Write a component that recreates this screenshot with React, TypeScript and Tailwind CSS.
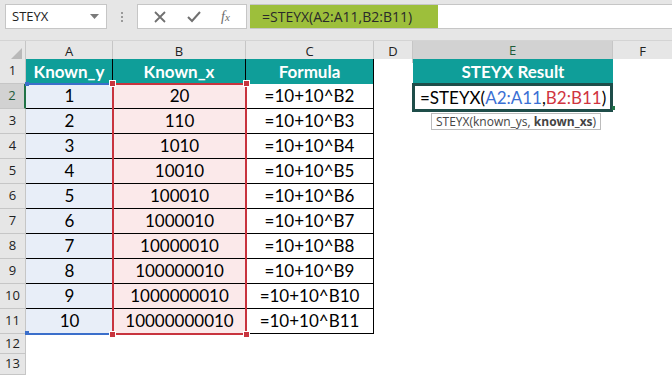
import React from "react";

const ui = { fontFamily: '"Open Sans", "Noto Sans", sans-serif' };
const cell = { fontFamily: 'Lato, "Open Sans", sans-serif' };

// x values are 10 + 10^y
const rows = Array.from({ length: 10 }, (_, i) => ({
  y: i + 1,
  x: i === 0 ? "20" : "1" + "0".repeat(i - 1) + "10",
  f: `=10+10^B${i + 2}`,
}));

const Handle = ({ className }: { className: string }) => (
  <div className={`absolute w-[7px] h-[7px] bg-[#c8343e] border border-white ${className}`} />
);

export default function App() {
  return (
    <div className="w-[672px] h-[375px] overflow-hidden bg-white relative" style={ui}>
      {/* Name box + formula bar */}
      <div className="h-[40px] bg-[#e6e6e6] flex items-start pt-[4px] pl-[5px]">
        <div className="w-[102px] h-[25px] bg-white border border-[#c6c6c6] flex items-center justify-between pl-[6px] pr-[7px]">
          <span className="text-[13px] text-[#222]">STEYX</span>
          <svg width="9" height="5" viewBox="0 0 9 5">
            <path d="M0 0h9L4.5 5z" fill="#7a7a7a" />
          </svg>
        </div>
        <div className="w-[30px] h-[25px] flex flex-col items-center justify-center gap-[2px]">
          <div className="w-[2px] h-[2px] bg-[#9a9a9a]" />
          <div className="w-[2px] h-[2px] bg-[#9a9a9a]" />
          <div className="w-[2px] h-[2px] bg-[#9a9a9a]" />
        </div>
        <div className="w-[110px] h-[25px] bg-white border border-[#c6c6c6] flex items-center justify-around px-[6px]">
          <svg width="12" height="12" viewBox="0 0 12 12">
            <path d="M1 1l10 10M11 1L1 11" stroke="#707070" strokeWidth="1.8" />
          </svg>
          <svg width="14" height="12" viewBox="0 0 14 12">
            <path d="M1 6l4 4 8-9" stroke="#707070" strokeWidth="2" fill="none" />
          </svg>
          <span className="text-[14px] italic text-[#6a6a6a]" style={{ fontFamily: '"Liberation Serif", serif' }}>
            f<span className="text-[11px]">x</span>
          </span>
        </div>
        <div className="ml-[3px] flex-1 h-[25px] bg-white border-y border-[#c6c6c6] flex items-stretch">
          <div className="w-[188px] bg-[#9dbf3b] flex items-center pl-[12px] text-[14px] text-[#2a2a2a]">
            =STEYX(A2:A11,B2:B11)
          </div>
        </div>
      </div>

      {/* Column headers */}
      <div className="grid grid-cols-[26px_87px_133px_128px_39px_200px_59px] h-[19px] bg-[#e6e6e6] text-[13px] text-[#222] border-t border-[#d4d4d4]">
        <div className="relative border-r border-[#c6c6c6]">
          <svg className="absolute right-[3px] bottom-[3px]" width="12" height="12" viewBox="0 0 12 12">
            <path d="M12 0v12H0z" fill="#b9b9b9" />
          </svg>
        </div>
        <div className="flex items-center justify-center border-r border-[#c6c6c6]">A</div>
        <div className="flex items-center justify-center border-r border-[#c6c6c6]">B</div>
        <div className="flex items-center justify-center border-r border-[#c6c6c6]">C</div>
        <div className="flex items-center justify-center border-r border-[#c6c6c6]">D</div>
        <div className="flex items-center justify-center bg-[#d2d2d2] border-r border-[#c6c6c6] border-b-2 border-b-[#217346] text-[#1f5c3a]">E</div>
        <div className="flex items-center justify-center">F</div>
      </div>

      {/* Sheet body */}
      <div className="relative">
        <div className="grid grid-cols-[26px_87px_133px_128px_39px_200px_59px] grid-rows-[25px_repeat(10,25px)_20px_21px]">
          {/* Row 1 */}
          <div className="bg-[#e6e6e6] border-r border-b border-[#c6c6c6] flex items-center justify-center text-[13px] text-[#222]">1</div>
          <div className="bg-[#0f9e99] border-r border-black flex items-center justify-center text-white font-bold text-[17px]" style={cell}>Known_y</div>
          <div className="bg-[#0f9e99] border-r border-black flex items-center justify-center text-white font-bold text-[17px]" style={cell}>Known_x</div>
          <div className="bg-[#0f9e99] border-r border-black flex items-center justify-center text-white font-bold text-[17px]" style={cell}>Formula</div>
          <div />
          <div className="bg-[#0f9e99] flex items-center justify-center text-white font-bold text-[17px]" style={cell}>STEYX Result</div>
          <div />

          {rows.map((r) => (
            <React.Fragment key={r.y}>
              <div
                className={`border-b border-[#c6c6c6] flex items-center justify-center text-[13px] ${
                  r.y === 1
                    ? "bg-[#d2d2d2] text-[#1f5c3a] border-r-2 border-r-[#217346]"
                    : "bg-[#e6e6e6] text-[#222] border-r border-r-[#c6c6c6]"
                }`}
              >
                {r.y + 1}
              </div>
              <div className="bg-[#e8eef8] border-b border-black flex items-center justify-center text-[17px] text-black" style={cell}>{r.y}</div>
              <div className="bg-[#fbe9ea] border-b border-black flex items-center justify-center text-[17px] text-black" style={cell}>{r.x}</div>
              <div className="border-b border-r border-black flex items-center justify-center text-[17px] text-black" style={cell}>{r.f}</div>
              <div />
              <div />
              <div />
            </React.Fragment>
          ))}

          {[12, 13].map((n) => (
            <React.Fragment key={n}>
              <div className="bg-[#e6e6e6] border-r border-b border-[#c6c6c6] flex items-center justify-center text-[13px] text-[#222]">{n}</div>
              <div />
              <div />
              <div />
              <div />
              <div />
              <div />
            </React.Fragment>
          ))}
        </div>

        {/* Range A2:A11 (blue) */}
        <div className="absolute left-[26px] top-[24px] w-[88px] h-[252px] border-y-2 border-[#3b6fcb]" />
        <div className="absolute left-[25px] top-[23px] w-[4px] h-[4px] bg-[#3b6fcb]" />
        <div className="absolute left-[25px] top-[272px] w-[4px] h-[4px] bg-[#3b6fcb]" />

        {/* Range B2:B11 (red) */}
        <div className="absolute left-[112px] top-[24px] w-[135px] h-[252px] border-2 border-[#c8343e]" />
        <Handle className="left-[109px] top-[21px]" />
        <Handle className="left-[243px] top-[21px]" />
        <Handle className="left-[109px] top-[272px]" />
        <Handle className="left-[243px] top-[272px]" />

        {/* Active cell E2 in edit mode */}
        <div
          className="absolute left-[412px] top-[24px] w-[201px] h-[29px] border-[3px] border-[#1e4d49] bg-white flex items-center pl-[5px] text-[17px] text-black whitespace-nowrap"
          style={cell}
        >
          <span>=STEYX(</span>
          <span className="text-[#3a6fd4]">A2:A11</span>
          <span>,</span>
          <span className="text-[#d0343f]">B2:B11</span>
          <span>)</span>
        </div>
        <div className="absolute left-[612px] top-[47px] w-[3px] h-[4px] bg-[#217346]" />

        {/* Argument tooltip */}
        <div className="absolute left-[431px] top-[54px] h-[17px] px-[4px] bg-white border border-[#bcbcbc] flex items-center text-[12px] text-[#444] whitespace-nowrap">
          STEYX(known_ys,&nbsp;<span className="font-bold">known_xs</span>)
        </div>
      </div>
    </div>
  );
}
